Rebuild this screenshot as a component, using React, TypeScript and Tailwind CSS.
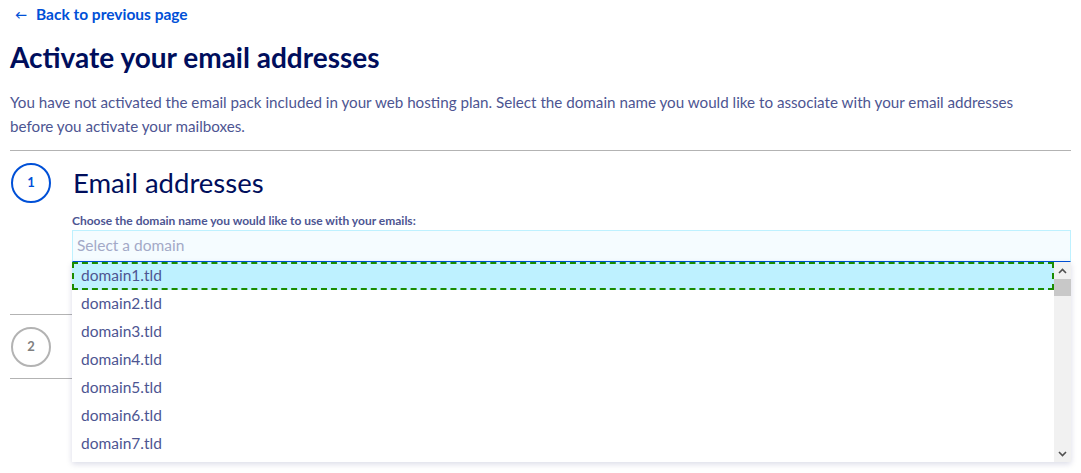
import React from 'react';

const domains = ['domain1.tld', 'domain2.tld', 'domain3.tld', 'domain4.tld', 'domain5.tld', 'domain6.tld', 'domain7.tld'];

export default function App() {
  return (
    <div className="relative w-[1081px] h-[473px] overflow-hidden bg-white px-[10px] font-['Lato',sans-serif]">
      <a href="#" className="flex items-center h-[30px] pl-[5px] text-[15.5px] font-bold text-[#0050d7]">
        <span className="w-[21px] text-[12px]">←</span>
        <span>Back to previous page</span>
      </a>

      <h1 className="mt-[10px] text-[28px] leading-[34px] font-bold text-[#000e5c]">Activate your email addresses</h1>

      <p className="mt-[16px] max-w-[1045px] text-[15.2px] leading-[24px] text-[#4d5592]">
        You have not activated the email pack included in your web hosting plan. Select the domain name you would like to associate with your email addresses before you activate your mailboxes.
      </p>

      <div className="mt-[12px] border-t border-[#b3b3b3]">
        <div className="flex pt-[12px] h-[163px]">
          <div className="w-[62px] shrink-0">
            <div className="w-[40px] h-[40px] ml-px rounded-full border-2 border-[#0050d7] flex items-center justify-center text-[13px] font-bold text-[#0050d7]">1</div>
          </div>
          <div className="flex-1">
            <h2 className="text-[27.5px] leading-[40px] text-[#000e5c] pl-px">Email addresses</h2>
            <div className="mt-[10px] text-[12px] leading-[15px] font-bold text-[#4d5592]">Choose the domain name you would like to use with your emails:</div>
            <div className="mt-[2px] h-[32px] bg-[#f5fcff] border border-[#bef1ff] border-b-[#0050d7] flex items-center px-[4px] text-[15.5px] text-[#a3a9c7]">Select a domain</div>
          </div>
        </div>
        <div className="flex items-center h-[65px] border-y border-[#b3b3b3]">
          <div className="w-[40px] h-[40px] ml-px rounded-full border-2 border-[#b3b3b3] flex items-center justify-center text-[13px] font-bold text-[#808080]">2</div>
        </div>
      </div>

      {/* open listbox */}
      <div className="absolute left-[72px] top-[262px] w-[999px] h-[200px] bg-white shadow-[0_2px_6px_rgba(0,14,92,0.15)] flex">
        <ul className="flex-1">
          {domains.map((d, i) => (
            <li
              key={d}
              className={
                i === 0
                  ? 'h-[28px] flex items-center px-[7px] text-[15.5px] text-[#4d5592] bg-[#bef1ff] border-2 border-dashed border-[#1a8c00]'
                  : 'h-[28px] flex items-center px-[9px] text-[15.5px] text-[#4d5592]'
              }
            >
              {d}
            </li>
          ))}
        </ul>
        <div className="w-[17px] bg-[#f1f1f1] flex flex-col">
          <div className="h-[17px] flex items-center justify-center">
            <svg width="9" height="6" viewBox="0 0 9 6"><path d="M1 5 L4.5 1.5 L8 5" stroke="#505050" strokeWidth="1.6" fill="none" /></svg>
          </div>
          <div className="h-[17px] bg-[#c8c8c8]" />
          <div className="flex-1" />
          <div className="h-[17px] flex items-center justify-center">
            <svg width="9" height="6" viewBox="0 0 9 6"><path d="M1 1 L4.5 4.5 L8 1" stroke="#505050" strokeWidth="1.6" fill="none" /></svg>
          </div>
        </div>
      </div>
    </div>
  );
}
